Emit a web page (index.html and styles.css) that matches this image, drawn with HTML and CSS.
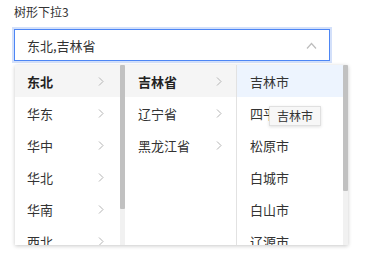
FILE: index.html
```html
<!DOCTYPE html>
<html lang="zh">
<head>
  <meta charset="UTF-8" />
  <title>树形下拉</title>
  <link rel="stylesheet" href="styles.css">
</head>
<body>
  <div class="page">
    <div class="label">树形下拉3</div>
    <div class="select">
      <span class="value">东北,吉林省</span>
      <svg class="caret" width="11" height="7" viewBox="0 0 11 7"><path d="M1 6.5 L5.5 1.5 L10 6.5" fill="none" stroke="#bdbdbd" stroke-width="1.2"/></svg>
    </div>

    <div class="dropdown">
      <div class="col col-1">
        <div class="list">
          <div class="item active bold">东北<svg class="arrow" viewBox="0 0 6 9"><path d="M1 0.5 L5 4.5 L1 8.5"/></svg></div>
          <div class="item">华东<svg class="arrow" viewBox="0 0 6 9"><path d="M1 0.5 L5 4.5 L1 8.5"/></svg></div>
          <div class="item">华中<svg class="arrow" viewBox="0 0 6 9"><path d="M1 0.5 L5 4.5 L1 8.5"/></svg></div>
          <div class="item">华北<svg class="arrow" viewBox="0 0 6 9"><path d="M1 0.5 L5 4.5 L1 8.5"/></svg></div>
          <div class="item">华南<svg class="arrow" viewBox="0 0 6 9"><path d="M1 0.5 L5 4.5 L1 8.5"/></svg></div>
          <div class="item">西北<svg class="arrow" viewBox="0 0 6 9"><path d="M1 0.5 L5 4.5 L1 8.5"/></svg></div>
          <div class="item">西南<svg class="arrow" viewBox="0 0 6 9"><path d="M1 0.5 L5 4.5 L1 8.5"/></svg></div>
        </div>
        <div class="scrollbar"><div class="thumb thumb-1"></div></div>
      </div>
      <div class="col col-2">
        <div class="list">
          <div class="item active bold">吉林省<svg class="arrow" viewBox="0 0 6 9"><path d="M1 0.5 L5 4.5 L1 8.5"/></svg></div>
          <div class="item">辽宁省<svg class="arrow" viewBox="0 0 6 9"><path d="M1 0.5 L5 4.5 L1 8.5"/></svg></div>
          <div class="item">黑龙江省<svg class="arrow" viewBox="0 0 6 9"><path d="M1 0.5 L5 4.5 L1 8.5"/></svg></div>
        </div>
      </div>
      <div class="col col-3">
        <div class="list">
          <div class="item selected">吉林市</div>
          <div class="item">四平市</div>
          <div class="item">松原市</div>
          <div class="item">白城市</div>
          <div class="item">白山市</div>
          <div class="item">辽源市</div>
        </div>
        <div class="scrollbar"><div class="thumb thumb-3"></div></div>
      </div>
      <div class="tooltip">吉林市</div>
    </div>
  </div>
</body>
</html>
```

FILE: styles.css
```css
html, body {
  height: 100%;
}
body {
  margin: 0;
  background: #fff;
  font-family: "Noto Sans CJK SC", "Noto Sans", sans-serif;
  color: #333;
}
.page {
  padding: 3px 0 0 14px;
}
.label {
  font-size: 12px;
  line-height: 17px;
  color: #333;
  margin-bottom: 9px;
}
.select {
  width: 316px;
  height: 32px;
  box-sizing: border-box;
  border: 1px solid #4d86f5;
  box-shadow: 0 0 0 2px #d3e0fa;
  display: flex;
  align-items: center;
  justify-content: space-between;
  padding: 0 12px 0 12px;
}
.value {
  font-size: 13px;
  color: #333;
}
.caret {
  margin-top: 1px;
}
.dropdown {
  position: relative;
  margin: 4px 0 0 1px;
  width: 333px;
  height: 180px;
  display: flex;
  background: #fff;
  box-shadow: 0 1px 4px rgba(0, 0, 0, 0.22);
}
.col {
  height: 180px;
  overflow: hidden;
  display: flex;
}
.list {
  flex: 1;
}
.scrollbar {
  width: 5px;
  height: 180px;
  background: #f1f1f1;
}
.thumb {
  background: #c1c1c1;
  border-radius: 1px;
}
.thumb-1 {
  height: 144px;
}
.thumb-3 {
  height: 126px;
}
.col-1 {
  width: 110px;
}
.col-2 {
  width: 111px;
  border-right: 1px solid #e2e2e2;
}
.col-3 {
  width: 111px;
}
.item {
  height: 32px;
  display: flex;
  align-items: center;
  justify-content: space-between;
  font-size: 13px;
  color: #333;
  padding: 0 16px 0 12px;
}
.col-2 .item {
  padding: 0 14px 0 13px;
}
.col-3 .item {
  padding-left: 13px;
}
.item.active {
  background: #f5f5f5;
}
.item.selected {
  background: #edf4fe;
}
.bold {
  font-weight: bold;
  color: #222;
}
.arrow {
  width: 6px;
  height: 9px;
  fill: none;
  stroke: #b3b3b3;
  stroke-width: 1;
}
.tooltip {
  position: absolute;
  left: 254px;
  top: 41px;
  padding: 0 7px;
  height: 18px;
  line-height: 18px;
  font-size: 12px;
  color: #333;
  background: #f7f7f7;
  border: 1px solid #e0e0e0;
  box-shadow: 0 1px 3px rgba(0, 0, 0, 0.12);
}
```
